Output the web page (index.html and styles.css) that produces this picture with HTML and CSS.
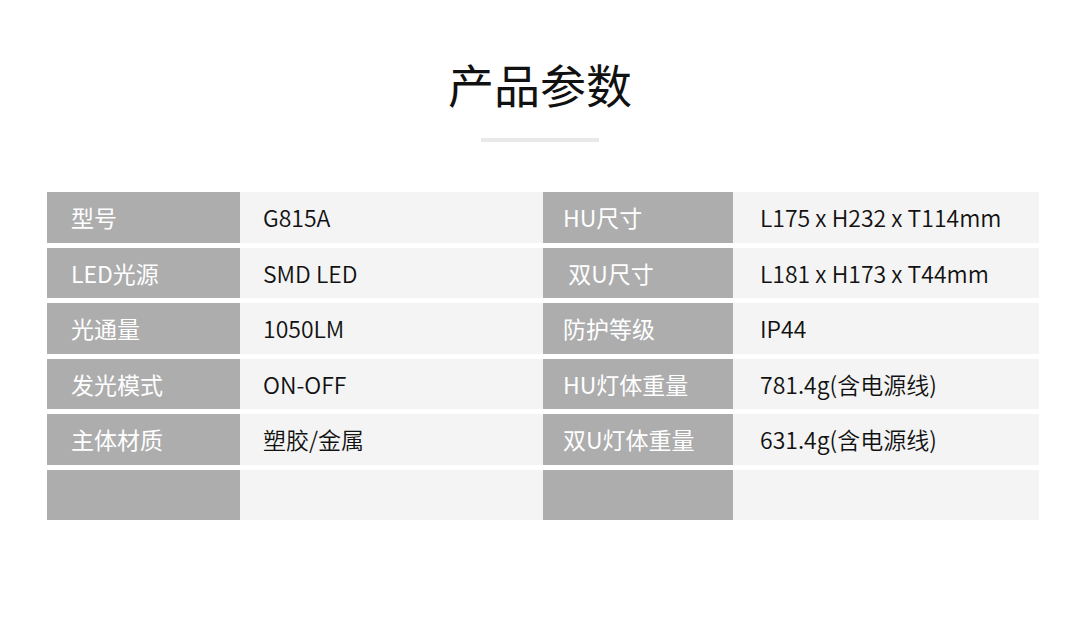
FILE: index.html
```html
<!DOCTYPE html>
<html lang="zh-CN">
<head>
<meta charset="utf-8">
<title>产品参数</title>
<link rel="stylesheet" href="styles.css">
</head>
<body>
<div class="page">
  <h1 class="title">产品参数</h1>
  <div class="bar"></div>
  <div class="spec">
    <div class="lbl l">型号</div><div class="val l">G815A</div>
    <div class="lbl r">HU尺寸</div><div class="val r">L175 x H232 x T114mm</div>

    <div class="lbl l">LED光源</div><div class="val l">SMD LED</div>
    <div class="lbl r">&nbsp;双U尺寸</div><div class="val r">L181 x H173 x T44mm</div>

    <div class="lbl l">光通量</div><div class="val l">1050LM</div>
    <div class="lbl r">防护等级</div><div class="val r">IP44</div>

    <div class="lbl l">发光模式</div><div class="val l">ON-OFF</div>
    <div class="lbl r">HU灯体重量</div><div class="val r">781.4g(含电源线)</div>

    <div class="lbl l">主体材质</div><div class="val l">塑胶/金属</div>
    <div class="lbl r">双U灯体重量</div><div class="val r">631.4g(含电源线)</div>

    <div class="lbl l"></div><div class="val l"></div>
    <div class="lbl r"></div><div class="val r"></div>
  </div>
</div>
</body>
</html>
```

FILE: styles.css
```css
html, body {
  margin: 0;
  padding: 0;
  background: #ffffff;
}
body {
  font-family: "Noto Sans CJK SC", "Noto Sans", sans-serif;
  width: 1080px;
  height: 620px;
  overflow: hidden;
}
.page {
  display: flex;
  flex-direction: column;
  align-items: center;
  padding-top: 50px;
}
.title {
  margin: 0;
  font-size: 46px;
  font-weight: 400;
  line-height: 66px;
  color: #111111;
  letter-spacing: 0;
}
.bar {
  width: 118px;
  height: 4px;
  background: #e8e8e8;
  margin-top: 22px;
}
.spec {
  margin-top: 50px;
  margin-left: 6px;
  display: grid;
  grid-template-columns: 193px 303px 190px 306px;
  grid-auto-rows: 50.5px;
  row-gap: 5px;
}
.lbl, .val {
  display: flex;
  align-items: center;
  font-size: 23px;
  white-space: pre;
}
.lbl {
  background: #adadad;
  color: #ffffff;
  font-weight: 400;
}
.val {
  background: #f4f4f4;
  color: #111111;
  font-weight: 350;
}
.lbl.l { padding-left: 24px; }
.val.l { padding-left: 23px; }
.lbl.r { padding-left: 20px; }
.val.r { padding-left: 27px; }
```
